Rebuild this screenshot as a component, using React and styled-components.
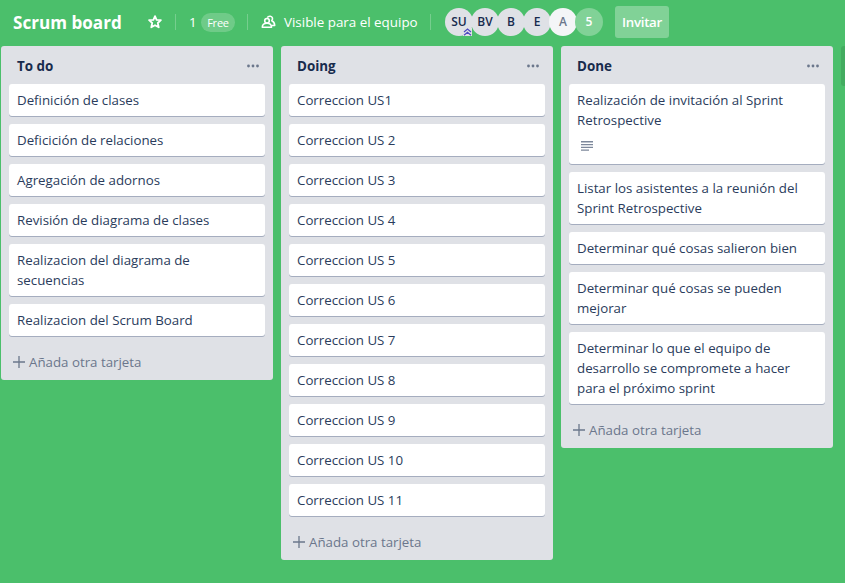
import React from "react";
import styled, { createGlobalStyle } from "styled-components";

const Global = createGlobalStyle`
  * { box-sizing: border-box; }
  html, body { margin: 0; height: 100%; overflow: hidden; }
  body {
    background: #4bbf6b;
    color: #172b4d;
    font: 13.3px/20px "Open Sans", "Noto Sans", sans-serif;
  }
  button { font: inherit; border: 0; padding: 0; background: none; color: inherit; }
`;

const Page = styled.div`
  width: 845px;
  height: 583px;
  overflow: hidden;
  display: flex;
  flex-direction: column;
`;

const Header = styled.header`
  display: flex;
  align-items: center;
  height: 46px;
  padding: 0 0 2px 13px;
  flex: none;
  color: #fff;
  white-space: nowrap;
`;

const Title = styled.h1`
  margin: 0;
  padding-top: 1px;
  width: 135px;
  font-size: 17.1px;
  line-height: 24px;
  font-weight: 700;
`;

const Divider = styled.span`
  width: 1px;
  height: 16px;
  margin: 0 ${(p) => p.$after}px 0 ${(p) => p.$before}px;
  background: rgba(255, 255, 255, 0.24);
`;

const Workspace = styled.span`
  width: 12px;
`;

const Plan = styled.span`
  width: 34px;
  height: 19px;
  border-radius: 10px;
  background: rgba(255, 255, 255, 0.2);
  font-size: 11px;
  line-height: 20px;
  text-align: center;
  letter-spacing: -0.2px;
`;

const Visibility = styled.button`
  display: flex;
  align-items: center;
  gap: 8px;
  width: 157px;
  font-size: 13.4px;
`;

const Members = styled.div`
  display: flex;
`;

const Avatar = styled.span`
  position: relative;
  width: 28px;
  height: 28px;
  margin-right: -2px;
  border-radius: 50%;
  background: ${(p) => p.$bg || "#dfe1e6"};
  color: ${(p) => p.$color || "#172b4d"};
  font-size: 12px;
  line-height: 28px;
  font-weight: 600;
  text-align: center;
`;

const AdminBadge = styled.svg`
  position: absolute;
  right: 1px;
  bottom: 0;
`;

const Invite = styled.button`
  width: 54px;
  height: 32px;
  margin-left: 14px;
  border-radius: 3px;
  background: rgba(255, 255, 255, 0.3);
  font-weight: 600;
  letter-spacing: -0.3px;
`;

const Board = styled.main`
  display: flex;
  align-items: flex-start;
  gap: 8px;
  padding-left: 1px;
`;

const List = styled.section`
  flex: none;
  width: 272px;
  padding: 0 8px;
  border-radius: 3px;
  background: #dfe1e6;
`;

const ListHeader = styled.div`
  display: flex;
  align-items: center;
  justify-content: space-between;
  height: 38px;
  padding: 2px 5px 0 8px;
`;

const ListTitle = styled.h2`
  margin: 0;
  font-size: 13.4px;
  line-height: 20px;
  font-weight: 700;
`;

const Cards = styled.div`
  display: flex;
  flex-direction: column;
  gap: 8px;
`;

const Card = styled.article`
  min-height: 32px;
  padding: 6px 8px;
  border-radius: 3px;
  background: #fff;
  box-shadow: 0 1px 0 #a5adbf;
  color: #2a3c5c;
`;

const CardBadge = styled.div`
  display: flex;
  height: 28px;
  padding: 11px 4px 7px;
`;

const AddCard = styled.button`
  display: flex;
  align-items: center;
  gap: 4px;
  height: 44px;
  padding: 8px 0 0 4px;
  color: #6b778c;
`;

const AddList = styled.div`
  flex: none;
  width: 272px;
  height: 40px;
  border-radius: 3px;
  background: #43ac60;
`;

const StarIcon = () => (
  <svg width="14" height="14" viewBox="0 0 14 14" fill="none" stroke="#fff" strokeWidth="1.8" strokeLinejoin="round">
    <path d="M7 1.2 8.6 4.9 12.9 5.2 9.8 8 10.7 12.3 7 10.2 3.3 12.3 4.2 8 1.1 5.2 5.4 4.9Z" />
  </svg>
);

const TeamIcon = () => (
  <svg width="15" height="14" viewBox="0 0 15 14" fill="none" stroke="#fff" strokeWidth="1.6" strokeLinejoin="round">
    <circle cx="6" cy="5.8" r="2.3" />
    <path d="M1.3 12.2c0-2.6 2-4 4.7-4s4.5 1.4 4.5 4Z" />
    <path d="M6.3 2.6C7 1.4 8.3 1.1 9.3 1.2c2 .2 3 2.5 1.5 4.6 1.6.7 2.8 2.400 2.900 4.700h-3" />
  </svg>
);

const DotsIcon = () => (
  <svg width="14" height="4" viewBox="0 0 14 4" fill="#6b778c">
    <circle cx="2.5" cy="2" r="1.4" />
    <circle cx="7" cy="2" r="1.4" />
    <circle cx="11.5" cy="2" r="1.4" />
  </svg>
);

const PlusIcon = () => (
  <svg width="12" height="12" viewBox="0 0 12 12" stroke="#6b778c" strokeWidth="1.3">
    <path d="M6 0v12M0 6h12" />
  </svg>
);

const DescriptionIcon = () => (
  <svg width="12" height="10" viewBox="0 0 12 10" fill="#7d889b">
    <path d="M0 0h12v1.5H0zM0 3h12v1.3H0zM0 5.7h12V7H0zM0 8.5h8v1.3H0z" />
  </svg>
);

const lists = [
  {
    title: "To do",
    cards: [
      { text: "Definición de clases" },
      { text: "Deficición de relaciones" },
      { text: "Agregación de adornos" },
      { text: "Revisión de diagrama de clases" },
      { text: "Realizacion del diagrama de secuencias" },
      { text: "Realizacion del Scrum Board" },
    ],
  },
  {
    title: "Doing",
    cards: ["US1", "US 2", "US 3", "US 4", "US 5", "US 6", "US 7", "US 8", "US 9", "US 10", "US 11"].map((s) => ({
      text: `Correccion ${s}`,
    })),
  },
  {
    title: "Done",
    cards: [
      { text: "Realización de invitación al Sprint Retrospective", description: true },
      { text: "Listar los asistentes a la reunión del Sprint Retrospective" },
      { text: "Determinar qué cosas salieron bien" },
      { text: "Determinar qué cosas se pueden mejorar" },
      { text: "Determinar lo que el equipo de desarrollo se compromete a hacer para el próximo sprint" },
    ],
  },
];

export default function App() {
  return (
    <Page>
      <Global />
      <Header>
        <Title>Scrum board</Title>
        <StarIcon />
        <Divider $before={13} $after={13} />
        <Workspace>1</Workspace>
        <Plan>Free</Plan>
        <Divider $before={12} $after={13} />
        <Visibility>
          <TeamIcon />
          Visible para el equipo
        </Visibility>
        <Divider $before={12} $after={14} />
        <Members>
          <Avatar>
            SU
            <AdminBadge width="9" height="8" viewBox="0 0 9 8">
              <path d="M0 0h9v8H0z" fill="#dfe1e6" />
              <path d="M1 4 4.5 1 8 4M1 7.3l3.5-3 3.5 3" fill="none" stroke="#4c4ac0" strokeWidth="1.2" />
            </AdminBadge>
          </Avatar>
          <Avatar>BV</Avatar>
          <Avatar>B</Avatar>
          <Avatar>E</Avatar>
          <Avatar $bg="#f4f5f7" $color="#6b778c">A</Avatar>
          <Avatar $bg="#81d297" $color="#fff">5</Avatar>
        </Members>
        <Invite>Invitar</Invite>
      </Header>
      <Board>
        {lists.map((list) => (
          <List key={list.title}>
            <ListHeader>
              <ListTitle>{list.title}</ListTitle>
              <DotsIcon />
            </ListHeader>
            <Cards>
              {list.cards.map((card) => (
                <Card key={card.text}>
                  {card.text}
                  {card.description && (
                    <CardBadge>
                      <DescriptionIcon />
                    </CardBadge>
                  )}
                </Card>
              ))}
            </Cards>
            <AddCard>
              <PlusIcon />
              Añada otra tarjeta
            </AddCard>
          </List>
        ))}
        <AddList />
      </Board>
    </Page>
  );
}
